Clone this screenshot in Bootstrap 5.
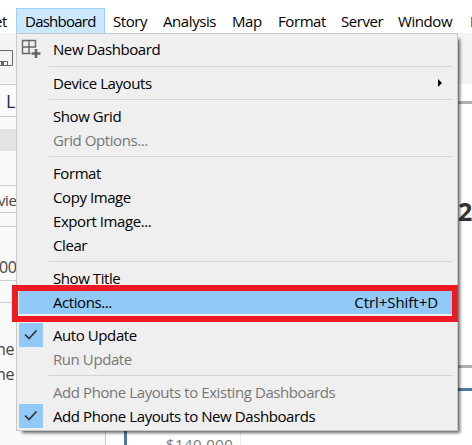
<!DOCTYPE html>
<html lang="en">
<head>
<meta charset="utf-8">
<meta name="viewport" content="width=device-width, initial-scale=1">
<title>Dashboard menu</title>
<link href="https://cdn.jsdelivr.net/npm/bootstrap@5.3.0/dist/css/bootstrap.min.css" rel="stylesheet">
<style>
body{width:472px;height:445px;font:15px/24px "Open Sans","Noto Sans",sans-serif;color:#000;letter-spacing:-.42px;background:#fff}
.app{height:445px}
.menu-bar{height:33px;padding-top:8px;flex:none}
.menu-bar a{color:#000;text-decoration:none;height:26px;line-height:26px;padding-left:8px;flex:none;white-space:nowrap}
.menu-bar .opened{background:#cce8ff;border:1px solid #99d1ff;line-height:24px;width:89px;letter-spacing:-.75px}
.menu-bar .m-first{width:16px;padding-left:0;text-indent:-6px}
.w-story{width:50px}.w-analysis{width:69px}.w-map{width:46px}.w-format{width:63px}.w-server{width:57px}.w-window{width:72px}
.tool-strip{height:51px;background:#f4f4f4;flex:none;padding-top:17px}
.side{width:106px;background:#fafafa;border-right:1px solid #ccc;flex:none;border-top:1px solid #ccc;color:#444}
.side div{border-bottom:1px solid #ccc;flex:none;white-space:nowrap}
.side .plain{border:0}
.s1{height:32px;font-size:18px;line-height:32px;color:#1d2b4f}
.side .s1{padding-left:6px}
.s2{height:12px}.s3{height:22px;background:#e3e3e3}.s4{height:35px}
.s5{height:27px;line-height:28px;text-indent:-2px}.s6{height:14px}
.s7{height:54px;padding-top:28px;text-indent:-1px;font-size:16px}.s8{height:22px}.s9{height:34px}.s10{height:25px;text-indent:-4px;font-size:16px}
.canvas-top{height:17px;flex:none}
.chart-a{height:267px;border:solid #b0b0b0;border-width:3px 0;margin-left:18px;flex:none}
.chart-a b{font-size:25px;line-height:30px;color:#333;margin-top:92px;width:14px;letter-spacing:0}
.chart-b{margin:20px 0 0 18px;border:solid #4e79a7;border-width:3px 0 0 3px;min-height:0}
.axis{width:114px;border-right:1px solid #ececec;color:#777;padding:41px 0 0 39px;height:66px;white-space:nowrap;letter-spacing:.4px}
.drop{left:16px;top:33px;width:442px;height:398px;background:#efefef;border:1px solid #c8c8c8;box-shadow:4px 4px 3px -2px rgba(0,0,0,.6);padding:3px 4px 2px 2px}
.entry{height:24px;line-height:24px;white-space:nowrap}
.entry.first{height:25px;line-height:25px}
.entry .mark-cell{width:24px;height:24px;margin-right:10px;flex:none}
.entry.off{color:#777}
.checked .mark-cell,.entry.active-row{background:#91c9f7}
.rule{height:9px;padding:4px 0 0 30px}
.rule i{display:block;height:1px;background:#d3d3d3}
.keys{padding-right:15px;letter-spacing:-.05px}
.red-box{left:12px;top:285px;width:446px;height:37px;border:6px solid #ed1c24}
</style>
<script src="https://cdn.jsdelivr.net/npm/bootstrap@5.3.0/dist/js/bootstrap.bundle.min.js"></script>
</head>
<body class="overflow-hidden position-relative">
<div class="app d-flex flex-column overflow-hidden">
  <nav class="menu-bar d-flex">
    <a class="m-first">et</a><a class="opened">Dashboard</a><a class="w-story">Story</a><a class="w-analysis">Analysis</a><a class="w-map">Map</a><a class="w-format">Format</a><a class="w-server">Server</a><a class="w-window">Window</a><a>H</a>
  </nav>
  <div class="tool-strip">
    <svg class="d-block" width="16" height="16" viewBox="0 0 16 16" fill="none" stroke="#666"><path d="M0 .5H12.500V15.500H0M0 11.500H7.500V15M3 13V15" /><path d="M1 12h3v3H1z" fill="#666" stroke="none"/></svg>
  </div>
  <main class="d-flex flex-grow-1">
    <aside class="side d-flex flex-column">
      <div class="s1">L</div><div class="s2 plain"></div><div class="s3 plain"></div><div class="s4"></div>
      <div class="s5">view</div><div class="s6"></div><div class="s7">00</div><div class="s8"></div>
      <div class="s9 plain"></div><div class="s10 plain">ne</div><div class="s10 plain">ne</div>
    </aside>
    <section class="d-flex flex-column flex-grow-1">
      <div class="canvas-top"></div>
      <div class="chart-a d-flex justify-content-end"><b>2</b></div>
      <div class="chart-b flex-grow-1 overflow-hidden"><div class="axis">$140,000</div></div>
    </section>
  </main>
</div>
<div class="drop position-absolute">
  <div class="entry first d-flex"><span class="mark-cell"><svg class="d-block" width="24" height="24" viewBox="0 0 24 24" fill="none" stroke="#666" stroke-width="1.400"><path d="M11.500 16.500h-8v-13h13v7M10 3.500v13M3.500 10h13"/><path d="M17 12v9M12.500 16.500h9" stroke-width="2.600"/></svg></span><span>New Dashboard</span></div>
  <div class="rule"><i></i></div>
  <div class="entry d-flex"><span class="mark-cell"></span><span>Device Layouts</span><svg class="ms-auto mt-2" width="20" height="8" viewBox="0 0 20 8"><path d="M5 0l4 4-4 4z"/></svg></div>
  <div class="rule"><i></i></div>
  <div class="entry d-flex"><span class="mark-cell"></span><span>Show Grid</span></div>
  <div class="entry off d-flex"><span class="mark-cell"></span><span>Grid Options...</span></div>
  <div class="rule"><i></i></div>
  <div class="entry d-flex"><span class="mark-cell"></span><span>Format</span></div>
  <div class="entry d-flex"><span class="mark-cell"></span><span>Copy Image</span></div>
  <div class="entry d-flex"><span class="mark-cell"></span><span>Export Image...</span></div>
  <div class="entry d-flex"><span class="mark-cell"></span><span>Clear</span></div>
  <div class="rule"><i></i></div>
  <div class="entry d-flex"><span class="mark-cell"></span><span>Show Title</span></div>
  <div class="entry active-row d-flex"><span class="mark-cell"></span><span>Actions...</span><span class="ms-auto keys">Ctrl+Shift+D</span></div>
  <div class="rule"><i></i></div>
  <div class="entry checked d-flex"><span class="mark-cell"><svg class="d-block" width="24" height="24" viewBox="0 0 24 24" fill="none" stroke="#333" stroke-width="1.700"><path d="M6 11.500l4 4 7.500-8"/></svg></span><span>Auto Update</span></div>
  <div class="entry off d-flex"><span class="mark-cell"></span><span>Run Update</span></div>
  <div class="rule"><i></i></div>
  <div class="entry off d-flex"><span class="mark-cell"></span><span>Add Phone Layouts to Existing Dashboards</span></div>
  <div class="entry checked d-flex"><span class="mark-cell"><svg class="d-block" width="24" height="24" viewBox="0 0 24 24" fill="none" stroke="#333" stroke-width="1.700"><path d="M6 11.500l4 4 7.500-8"/></svg></span><span>Add Phone Layouts to New Dashboards</span></div>
</div>
<div class="red-box position-absolute"></div>
</body>
</html>
